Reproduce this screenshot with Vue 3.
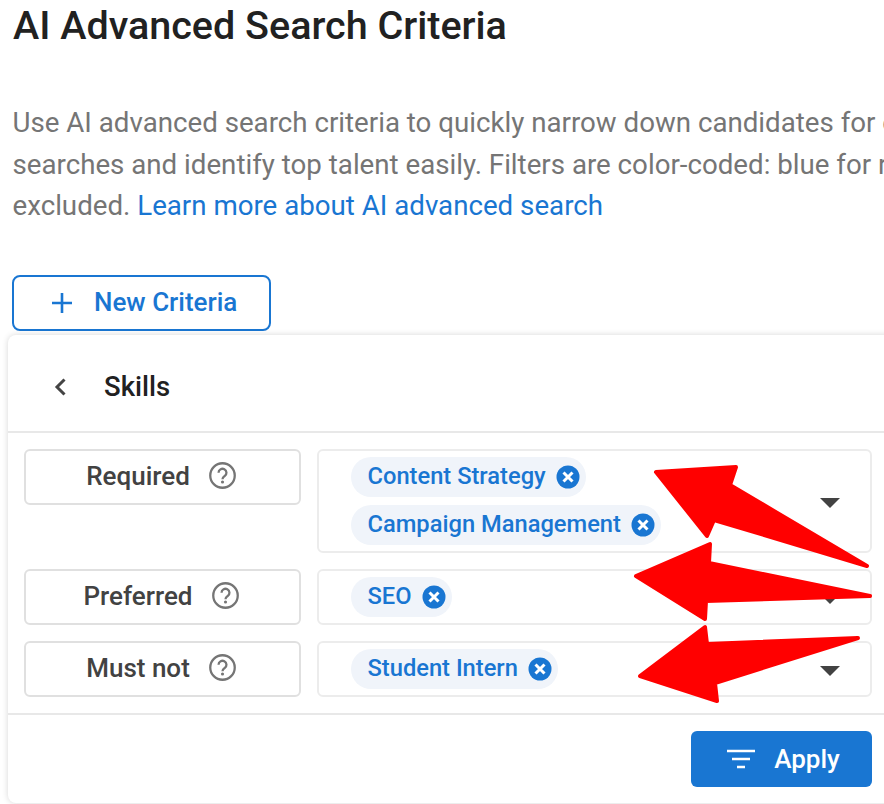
<template>
  <div class="page">
    <h1 class="title">AI Advanced Search Criteria</h1>

    <p class="intro">
      <span class="line">Use AI advanced search criteria to quickly narrow down candidates for each role, saving time on</span>
      <span class="line">searches and identify top talent easily. Filters are color-coded: blue for required, red for</span>
      <span class="line">excluded. <a class="link">Learn more about AI advanced search</a></span>
    </p>

    <button class="new-btn">
      <svg class="plus" viewBox="0 0 20 20" width="20" height="20"><path d="M10 0v20M0 10h20" stroke="#1976d2" stroke-width="2.6" fill="none" /></svg>
      <span class="new-label">New Criteria</span>
    </button>

    <section class="card">
      <header class="card-head">
        <svg class="back" viewBox="0 0 12 20" width="12" height="20"><path d="M10.5 2.500 3 10l7.500 7.500" stroke="#444" stroke-width="3" fill="none" /></svg>
        <span class="card-title">Skills</span>
      </header>

      <div class="rows">
        <div v-for="row in rows" :key="row.label" class="row">
          <div class="label-box">
            <span class="label-text">{{ row.label }}</span>
            <svg class="help" viewBox="0 0 26 26" width="27" height="27">
              <circle cx="13" cy="13" r="11.800" stroke="#757575" stroke-width="2.200" fill="none" />
              <path d="M9.200 10.400a3.800 3.800 0 1 1 5.900 3.100c-1.300.9-2.100 1.500-2.100 3" stroke="#757575" stroke-width="2.200" fill="none" />
              <circle cx="13" cy="19.300" r="1.500" fill="#757575" />
            </svg>
          </div>
          <div class="select-box">
            <div class="chips">
              <span v-for="chip in row.chips" :key="chip" class="chip">
                <span class="chip-text">{{ chip }}</span>
                <svg class="chip-x" viewBox="0 0 24 24" width="24" height="24">
                  <circle cx="12" cy="12" r="11.500" fill="#1976d2" />
                  <path d="M7.500 7.500l9 9M16.500 7.500l-9 9" stroke="#fff" stroke-width="3" />
                </svg>
              </span>
            </div>
            <span class="caret"></span>
          </div>
        </div>
      </div>

      <footer class="card-foot">
        <button class="apply-btn">
          <svg viewBox="0 0 28 20" width="28" height="20"><path d="M0 2h28M5 10h18M10 18h8" stroke="#fff" stroke-width="2.600" fill="none" /></svg>
          Apply
        </button>
      </footer>
    </section>

    <svg class="arrows" viewBox="0 0 884 804" width="884" height="804">
      <polygon points="656,472 736,467 730,485 867,566 714,520 707,536" />
      <polygon points="636,576 710,544 709,563 870,596 706,601 705,619" />
      <polygon points="640,676 705,627 707,644 858,638 715,683 717,701" />
    </svg>
  </div>
</template>

<script setup>
const rows = [
  { label: 'Required', chips: ['Content Strategy', 'Campaign Management'] },
  { label: 'Preferred', chips: ['SEO'] },
  { label: 'Must not', chips: ['Student Intern'] },
];
</script>

<style>
html, body { margin: 0; background: #fff; }
</style>

<style scoped>
.page {
  position: relative;
  width: 884px;
  height: 804px;
  overflow: hidden;
  box-sizing: border-box;
  font-family: Roboto, sans-serif;
  background: #fff;
}

.title {
  margin: 0;
  padding: 5px 0 0 13px;
  font-size: 39.500px;
  line-height: 42px;
  font-weight: 500;
  color: #212121;
  white-space: nowrap;
}

.intro {
  margin: 55px 0 0;
  padding-left: 12.500px;
  font-size: 27.700px;
  line-height: 41.500px;
  color: #757575;
  white-space: nowrap;
}
.line { display: block; }
.link { color: #1976d2; }

.new-btn {
  display: flex;
  align-items: center;
  gap: 22px;
  margin: 48px 0 0 12px;
  width: 259px;
  height: 56px;
  padding: 0 0 0 38px;
  box-sizing: border-box;
  border: 2px solid #1976d2;
  border-radius: 8px;
  background: #fff;
  color: #1976d2;
  font-family: inherit;
  font-size: 26px;
  font-weight: 500;
}
.new-label { margin-top: -1px; }

.card {
  margin: 4px 0 0 8px;
  width: 900px;
  height: 468px;
  background: #fff;
  border-radius: 8px;
  box-shadow: 0 0 6px rgba(0, 0, 0, 0.16);
}

.card-head {
  display: flex;
  align-items: center;
  height: 98px;
  box-sizing: border-box;
  padding: 8px 0 0 46px;
  gap: 38px;
  border-bottom: 2px solid #e8e8e8;
}
.card-title {
  font-size: 27.500px;
  font-weight: 500;
  color: #212121;
}

.rows {
  display: flex;
  flex-direction: column;
  gap: 16px;
  padding: 16px 0 16px 16px;
  border-bottom: 2px solid #e8e8e8;
}
.row {
  display: flex;
  align-items: flex-start;
  gap: 16px;
}

.label-box {
  display: flex;
  align-items: center;
  justify-content: center;
  gap: 19px;
  width: 277px;
  height: 56px;
  box-sizing: border-box;
  border: 2px solid #e0e0e0;
  border-radius: 6px;
  padding: 0 3px 0 0;
  font-size: 26px;
  font-weight: 500;
  color: #424242;
}
.label-text { margin-top: -2px; }
.help { margin-top: -2px; }

.select-box {
  display: flex;
  align-items: center;
  justify-content: space-between;
  width: 555px;
  min-height: 56px;
  box-sizing: border-box;
  padding: 6px 30px 6px 32px;
  border: 2px solid #ececec;
  border-radius: 6px;
}
.chips {
  display: flex;
  flex-direction: column;
  align-items: flex-start;
  gap: 8px;
}
.chip {
  display: flex;
  align-items: center;
  gap: 10px;
  height: 40px;
  padding: 0 6px 0 16.500px;
  border-radius: 20px;
  background: #f0f4fa;
  color: #1976d2;
  font-size: 23.700px;
  font-weight: 500;
  white-space: nowrap;
}
.chip-text { margin-top: -2px; }

.caret {
  width: 0;
  height: 0;
  margin-top: 4px;
  border-left: 10px solid transparent;
  border-right: 10px solid transparent;
  border-top: 10px solid #424242;
}

.card-foot {
  display: flex;
  justify-content: flex-end;
  padding: 16px 12px 0 0;
  width: 876px;
  box-sizing: border-box;
}
.apply-btn {
  display: flex;
  align-items: center;
  justify-content: center;
  gap: 19px;
  width: 181px;
  height: 56px;
  padding: 0 0 0 4px;
  border: 0;
  border-radius: 6px;
  background: #1976d2;
  color: #fff;
  font-family: inherit;
  font-size: 26px;
  font-weight: 500;
}

.arrows {
  position: absolute;
  top: 0;
  left: 0;
  pointer-events: none;
}
.arrows polygon {
  fill: #ff0000;
  stroke: #ff0000;
  stroke-width: 4;
  stroke-linejoin: round;
}
</style>
